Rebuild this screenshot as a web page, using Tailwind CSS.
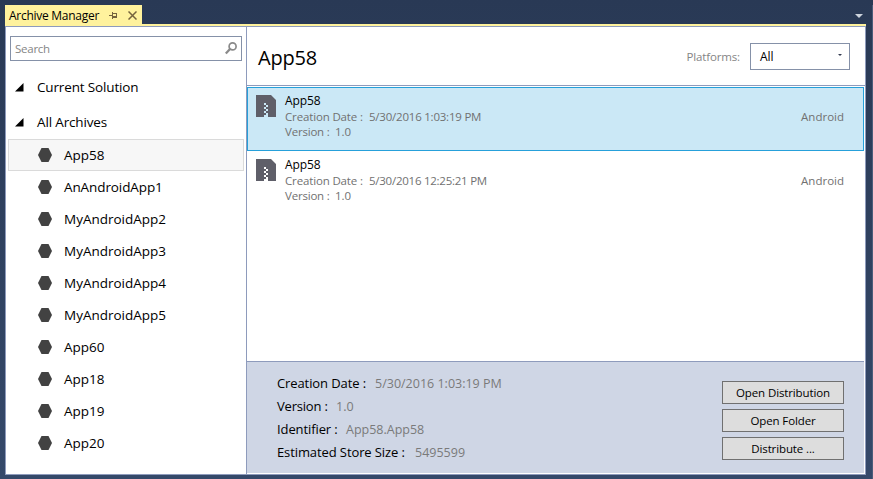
<!DOCTYPE html>
<html lang="en">
<head>
<meta charset="utf-8">
<title>Archive Manager</title>
<script src="https://cdn.jsdelivr.net/npm/@tailwindcss/browser@4"></script>
</head>
<body class="w-[873px] h-[479px] overflow-hidden bg-linear-to-b from-[#293955] to-[#35496a] font-['Open_Sans','Noto_Sans',sans-serif] text-black">
<svg class="hidden">
  <symbol id="hex" viewBox="0 0 14 14"><path d="M3.500 0h7L14 7l-3.500 7h-7L0 7z" fill="#424242"/></symbol>
  <symbol id="tri" viewBox="0 0 9 9"><path d="M8.500 0v8.500H0z" fill="#000"/></symbol>
  <symbol id="zip" viewBox="0 0 20 22"><path fill-rule="evenodd" fill="#5f5f69" d="M0 0h15l5 5v17H0zM8 8h2v2H8zM10 10h2v2h-2zM8 12h2v2H8zM10 14h2v2h-2zM8 16h2v2H8zM10 18h2v2h-2zM8 20h4v2H8z"/></symbol>
</svg>
<div class="h-full pt-[5px] pl-[5px] pr-[7px] pb-1 flex flex-col relative">
  <div class="absolute right-0 top-[5px] bottom-0 w-px bg-[#4b5c7a]"></div>
  <header class="flex h-[19px] items-stretch justify-between">
    <div class="w-[137px] bg-[#fff29d] flex items-center pl-1">
      <span class="text-[12px] leading-[19px] tracking-[-0.27px] whitespace-nowrap w-[100px] pt-0.5">Archive Manager</span>
      <svg class="w-[9px] h-[7px] mt-px shrink-0" viewBox="0 0 9 7" fill="#75633d" shape-rendering="crispEdges"><path d="M0 3h3v1H0zM3 0h1v7H3zM4 1h4v1H4zM7 1h1v4H7zM4 4h4v2H4z"/></svg>
      <svg class="w-[9px] h-[9px] ml-[10px] mt-0.5 shrink-0" viewBox="0 0 9 9" stroke="#75633d" stroke-width="1.500"><path d="M.5.5l8 8M8.500.5l-8 8"/></svg>
    </div>
    <svg class="w-2 h-1 mt-[9px] mr-[3px]" viewBox="0 0 8 4"><path d="M0 0h8L4 4z" fill="#ced4dd"/></svg>
  </header>
  <div class="h-0.5 bg-[#fff29d] shrink-0"></div>
  <main class="flex-1 min-h-0 bg-white border border-[#8e9bbc] flex">
    <nav class="w-[241px] border-r border-[#8e9bbc] pt-[9px] text-[13.5px] whitespace-nowrap shrink-0">
      <div class="ml-1 w-[232px] h-[25px] border border-[#8591a8] flex items-center justify-between pl-1 pr-1">
        <span class="text-[11.5px] tracking-[-0.25px] text-[#858585]">Search</span>
        <svg class="w-3 h-[13px]" viewBox="0 0 12 13" fill="none" stroke="#8a8a8a"><circle cx="7.600" cy="4.400" r="3.500" stroke-width="1.700"/><path d="M5 7L.8 11.500" stroke-width="2.300"/></svg>
      </div>
      <div class="mt-[9px] h-[35px] flex items-center pl-[9px]"><svg class="w-[9px] h-[9px] mr-[13px]"><use href="#tri"/></svg><span class="tracking-[-0.15px]">Current Solution</span></div>
      <div class="h-[34px] flex items-center pl-[9px]"><svg class="w-[9px] h-[9px] mr-[13px] mt-px"><use href="#tri"/></svg><span class="tracking-[-0.15px] pt-px">All Archives</span></div>
      <ul class="leading-[30px]">
        <li class="ml-0.5 w-[236px] h-8 border border-[#dadada] bg-[#f7f7f7] flex items-center pl-[29px] gap-3"><svg class="w-[14px] h-[14px]"><use href="#hex"/></svg>App58</li>
        <li class="h-8 flex items-center pl-8 gap-3"><svg class="w-[14px] h-[14px]"><use href="#hex"/></svg><span class="tracking-[-0.1px]">AnAndroidApp1</span></li>
        <li class="h-8 flex items-center pl-8 gap-3"><svg class="w-[14px] h-[14px]"><use href="#hex"/></svg>MyAndroidApp2</li>
        <li class="h-8 flex items-center pl-8 gap-3"><svg class="w-[14px] h-[14px]"><use href="#hex"/></svg>MyAndroidApp3</li>
        <li class="h-8 flex items-center pl-8 gap-3"><svg class="w-[14px] h-[14px]"><use href="#hex"/></svg>MyAndroidApp4</li>
        <li class="h-8 flex items-center pl-8 gap-3"><svg class="w-[14px] h-[14px]"><use href="#hex"/></svg>MyAndroidApp5</li>
        <li class="h-8 flex items-center pl-8 gap-3"><svg class="w-[14px] h-[14px]"><use href="#hex"/></svg>App60</li>
        <li class="h-8 flex items-center pl-8 gap-3"><svg class="w-[14px] h-[14px]"><use href="#hex"/></svg>App18</li>
        <li class="h-8 flex items-center pl-8 gap-3"><svg class="w-[14px] h-[14px]"><use href="#hex"/></svg>App19</li>
        <li class="h-8 flex items-center pl-8 gap-3"><svg class="w-[14px] h-[14px]"><use href="#hex"/></svg>App20</li>
      </ul>
    </nav>
    <section class="flex-1 min-w-0 flex flex-col">
      <div class="h-[59px] border-b border-[#8e9bbc] flex items-center pl-[11px] pr-[15px] shrink-0">
        <h1 class="text-[20px] leading-7 pt-1 tracking-[-0.2px]">App58</h1>
        <span class="ml-auto mr-[10px] pt-px text-[11.5px] tracking-[-0.15px] text-[#858585]">Platforms:</span>
        <div class="w-[100px] h-[27px] border border-[#8591a8] flex items-center justify-between pl-[9px] pr-[7px] text-[12px]"><span class="pt-px">All</span><svg class="w-[4px] h-[2px] mb-[3px]" viewBox="0 0 4 2"><path d="M0 0h4L2 2z" fill="#333b50"/></svg></div>
      </div>
      <div class="mt-px mb-px mr-px h-[64px] border border-[#26a0da] bg-[#cbe8f6] flex pl-2 pt-[5px] pr-[19px] shrink-0">
        <svg class="w-5 h-[22px] mt-[2px] mr-[9px]"><use href="#zip"/></svg>
        <div class="text-[11.5px] leading-[15px] text-[#717171] whitespace-nowrap">
          <div class="text-[12px] leading-4 text-black font-medium tracking-[-0.1px]">App58</div>
          <div class="flex"><span class="w-[84px] tracking-[-0.15px]">Creation Date :</span><span class="tracking-[-0.22px]">5/30/2016 1:03:19 PM</span></div>
          <div class="flex"><span class="w-[50px] tracking-[-0.2px]">Version :</span><span>1.0</span></div>
        </div>
        <span class="ml-auto mt-4 text-[11.5px] leading-[15px] text-[#717171]">Android</span>
      </div>
      <div class="mr-px h-[64px] flex pl-[9px] pt-[5px] pr-[20px] shrink-0">
        <svg class="w-5 h-[22px] mt-[2px] mr-[9px]"><use href="#zip"/></svg>
        <div class="text-[11.5px] leading-[15px] text-[#717171] whitespace-nowrap">
          <div class="text-[12px] leading-4 text-black font-medium tracking-[-0.1px]">App58</div>
          <div class="flex"><span class="w-[84px] tracking-[-0.15px]">Creation Date :</span><span class="tracking-[-0.25px]">5/30/2016 12:25:21 PM</span></div>
          <div class="flex"><span class="w-[50px] tracking-[-0.2px]">Version :</span><span>1.0</span></div>
        </div>
        <span class="ml-auto mt-4 text-[11.5px] leading-[15px] text-[#717171]">Android</span>
      </div>
      <footer class="mt-auto mb-px mr-px h-[112px] border-t border-[#8e9bbc] bg-[#cfd6e5] flex justify-between pl-[30px] pr-5 pt-[10px]">
        <div class="text-[12.5px] leading-[23px] text-[#7a7a7a] whitespace-nowrap">
          <div class="flex"><span class="w-[98px] text-[13px] text-black font-medium tracking-[-0.1px]">Creation Date :</span>5/30/2016 1:03:19 PM</div>
          <div class="flex"><span class="w-[59px] text-[13px] text-black font-medium tracking-[-0.2px]">Version :</span>1.0</div>
          <div class="flex"><span class="w-[69px] text-[13px] text-black font-medium tracking-[-0.1px]">Identifier :</span>App58.App58</div>
          <div class="flex"><span class="w-[138px] text-[13px] text-black font-medium tracking-[-0.1px]">Estimated Store Size :</span>5495599</div>
        </div>
        <div class="w-[122px] pt-[9px] flex flex-col gap-[5px] text-[11.5px] tracking-[-0.12px]">
          <button class="h-[23px] border border-[#707070] bg-[#dddddd]">Open Distribution</button>
          <button class="h-[23px] border border-[#707070] bg-[#dddddd]">Open Folder</button>
          <button class="h-[23px] border border-[#707070] bg-[#dddddd]">Distribute ...</button>
        </div>
      </footer>
    </section>
  </main>
</div>
</body>
</html>
